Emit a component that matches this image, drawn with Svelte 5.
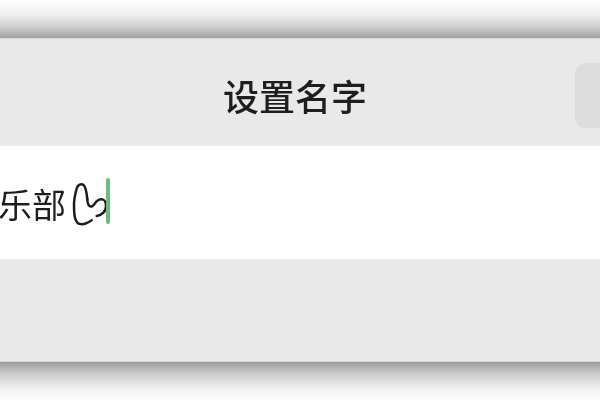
<script lang="ts">
  // Rename sheet: title bar, name field, empty footer
  const title = "设置名字";
  const name = "俱乐部";
</script>

<div class="page">
  <div class="shade top"></div>
  <section class="sheet">
    <header class="bar">
      <h1>{title}</h1>
      <button class="done" aria-label="完成"></button>
    </header>
    <div class="field">
      <span class="value">{name}</span>
      <svg class="doodle" width="36" height="46" viewBox="0 0 36 46" fill="none" aria-hidden="true">
        <path
          d="M15.3 18.3C14.5 9 13 3.3 9.7 3.3C6 3.3 4.6 6.5 4 10C2.6 16 2 19.5 2 23C2 28 2 33 3 36.7C4 41 6.5 43.3 9.7 43.3C13 43.3 16.5 41.5 19.7 39.3"
          stroke="#1c1c1c"
          stroke-width="2.5"
          stroke-linecap="round"
        />
        <path
          d="M15.3 18.3C15.6 22.5 17 25.5 19 25.5C21.5 25.5 23 21.5 25 20C26.5 18.8 28 18.3 29.7 18.3C32.5 18.3 34 21.5 34 25C34 28 33 30.3 31.3 31.7C29.5 33.3 27 34.5 24.7 35"
          stroke="#1c1c1c"
          stroke-width="2.5"
          stroke-linecap="round"
        />
      </svg>
      <span class="caret"></span>
    </div>
    <div class="footer"></div>
  </section>
  <div class="shade bottom"></div>
</div>

<style>
  :global(body) {
    margin: 0;
    background: #fff;
  }

  .page {
    width: 600px;
    height: 400px;
    display: flex;
    flex-direction: column;
    overflow: hidden;
    font-family: "Noto Sans CJK SC", "Liberation Sans", sans-serif;
  }

  .shade {
    flex: none;
  }

  .top {
    height: 38px;
    background: linear-gradient(to bottom, #fefefe 0%, #f0f0f0 35%, #d0d0d0 70%, #a2a2a2 100%);
  }

  .bottom {
    height: 38px;
    background: linear-gradient(to top, #fefefe 0%, #f0f0f0 30%, #cdcdcd 68%, #9c9c9c 100%);
  }

  .sheet {
    flex: 1;
    display: flex;
    flex-direction: column;
    background: #e9e9e9;
    border-top: 1px solid #d6d6d6;
    border-bottom: 1px solid #d2d2d2;
  }

  .bar {
    height: 107px;
    flex: none;
    display: flex;
    align-items: center;
    justify-content: center;
    position: relative;
  }

  h1 {
    margin: 4px 10px 0 0;
    font-size: 36px;
    font-weight: 500;
    line-height: 1;
    color: #1e1e1e;
    filter: blur(0.4px);
  }

  .done {
    position: absolute;
    right: -12px;
    top: 24px;
    width: 37px;
    height: 65px;
    padding: 0;
    border: none;
    border-radius: 11px;
    background: #dcdcdc;
  }

  .field {
    height: 113px;
    flex: none;
    display: flex;
    align-items: center;
    background: #fff;
    overflow: hidden;
  }

  .value {
    flex: none;
    margin-left: -36px;
    margin-top: 3px;
    font-size: 34px;
    line-height: 1;
    color: #1e1e1e;
    filter: blur(0.4px);
  }

  .doodle {
    flex: none;
    margin-left: 6px;
    margin-top: 2px;
  }

  .caret {
    flex: none;
    width: 4px;
    height: 46px;
    margin-left: -2px;
    margin-bottom: 4px;
    border-radius: 2px;
    background: #6dbb7d;
  }

  .footer {
    flex: 1;
  }
</style>
